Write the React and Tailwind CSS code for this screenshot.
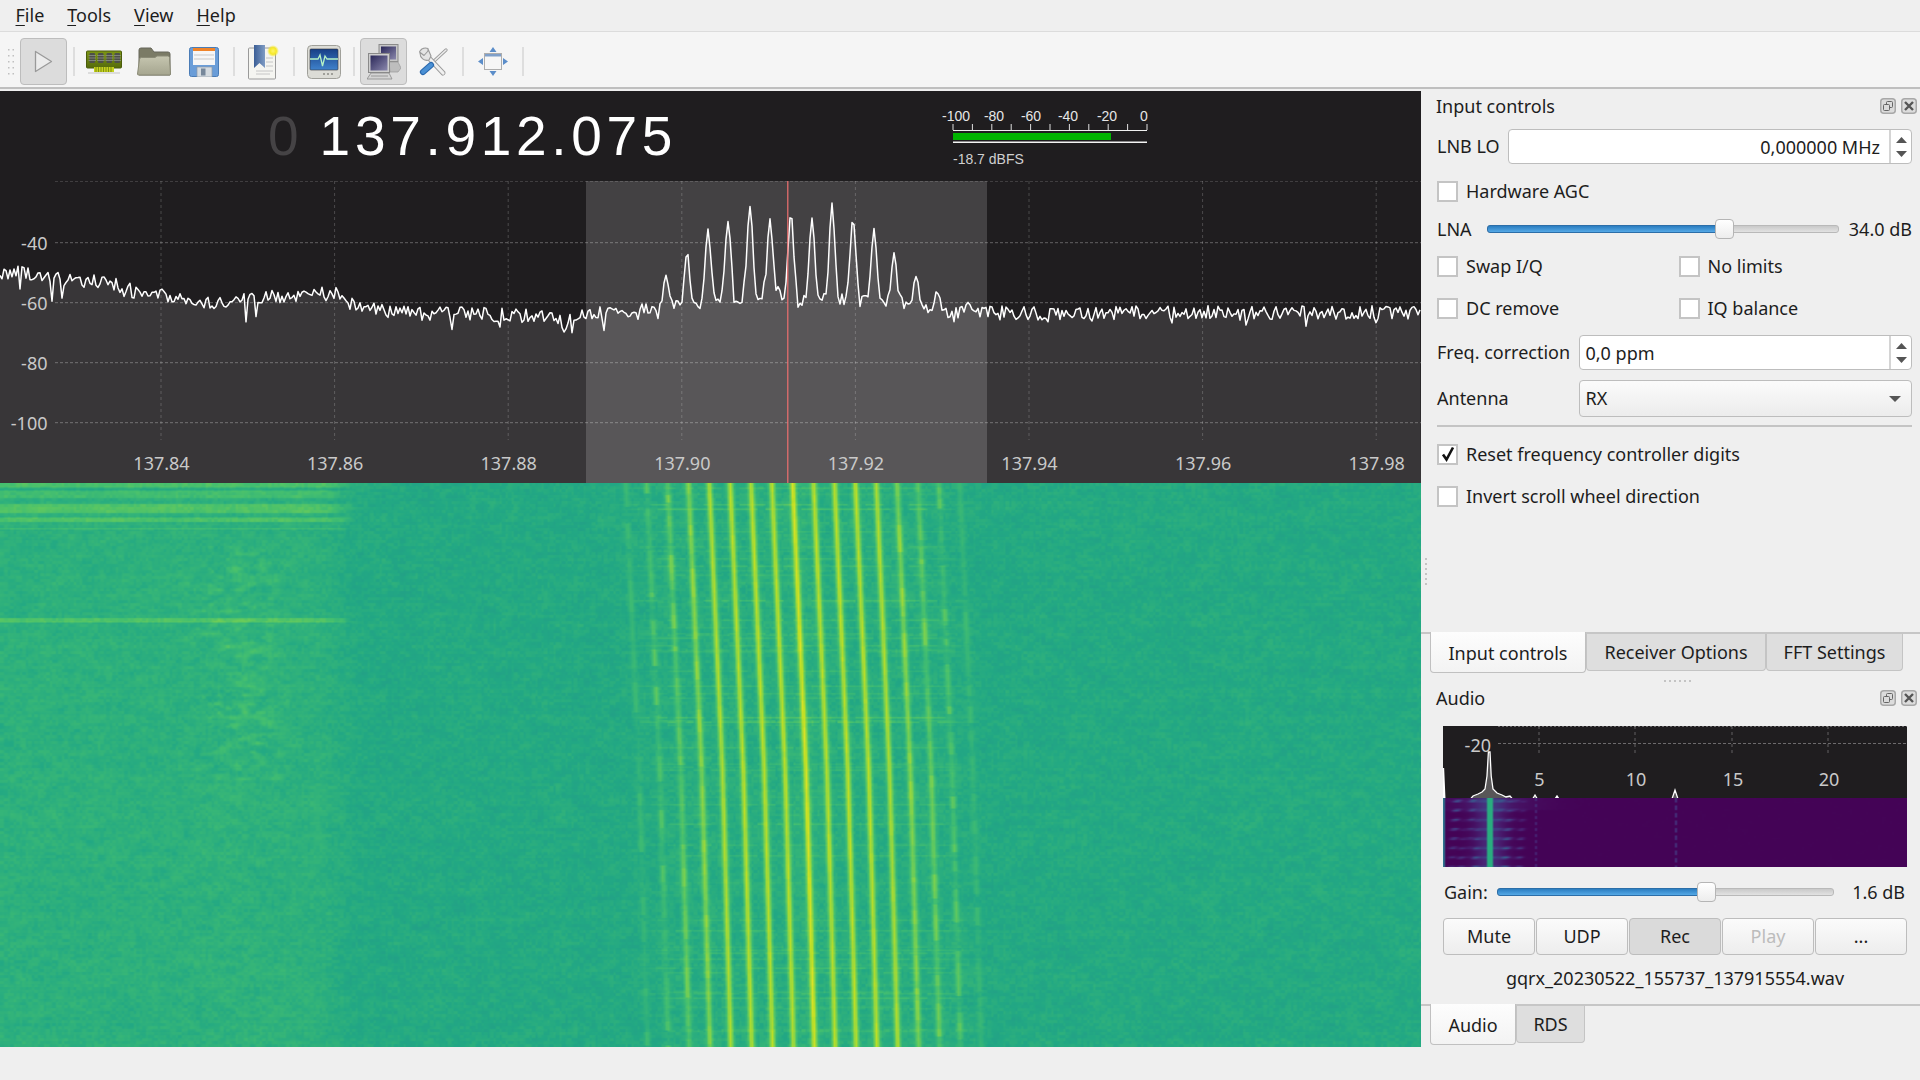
import React, { useEffect, useRef } from 'react';

// seeded random so the plots come out the same on every load
const makeRandom = (seed) => () => {
  seed = (seed + 0x6d2b79f5) | 0;
  let t = Math.imul(seed ^ (seed >>> 15), 1 | seed);
  t = (t + Math.imul(t ^ (t >>> 7), 61 | t)) ^ t;
  return ((t ^ (t >>> 14)) >>> 0) / 4294967296;
};

const VIRIDIS = [
  [68, 1, 84], [72, 36, 117], [65, 68, 135], [53, 95, 141], [42, 120, 142], [33, 145, 140],
  [34, 168, 132], [68, 191, 112], [122, 209, 81], [189, 223, 38], [253, 231, 37],
];

const viridis = (v) => {
  const p = Math.max(0, Math.min(0.9999, v)) * 10;
  const i = Math.floor(p);
  const f = p - i;
  return VIRIDIS[i].map((c, k) => c + (VIRIDIS[i + 1][k] - c) * f);
};

const interp = (pts, x) => {
  for (let i = 1; i < pts.length; i++) {
    if (x <= pts[i][0]) {
      const [x0, y0] = pts[i - 1];
      const [x1, y1] = pts[i];
      return y0 + ((y1 - y0) * (x - x0)) / (x1 - x0);
    }
  }
  return pts[pts.length - 1][1];
};

// FFT trace
const FLOOR = [
  [0, 275], [20, 274], [51, 280], [102, 282], [143, 295], [168, 297], [219, 305], [265, 299], [327, 292],
  [347, 297], [357, 309], [408, 314], [510, 316], [576, 320], [587, 313], [640, 312], [680, 309], [700, 307],
  [735, 300], [780, 297], [800, 306], [850, 302], [870, 306], [900, 307], [930, 310], [985, 314], [1000, 314], [1421, 313],
];
const PEAKS = [
  [666, 275], [687, 252], [708, 228], [728, 221], [750, 206], [770, 220], [791, 213], [812, 219],
  [832, 204], [853, 218], [874, 228], [894, 252], [916, 277], [937, 292], [968, 302],
];

const buildTrace = () => {
  const rnd = makeRandom(42);
  const pts = [];
  for (let x = 0; x <= 1421; x += 2) {
    const floor = interp(FLOOR, x);
    let noise = rnd() * 14 - 8;
    if (rnd() < 0.1) noise += 3 + rnd() * 14;
    let lift = 0;
    let share = 0;
    for (const [px, py] of PEAKS) {
      const h = floor - py;
      const dx = Math.abs(x - px);
      const g = Math.exp(-((dx / 3.8) ** 2));
      const l = h * (0.92 * g + 0.08 * Math.exp(-dx / 7));
      if (l > lift) {
        lift = l;
        share = g;
      }
    }
    pts.push([x, floor + noise * (1 - 0.85 * share) - lift]);
  }
  return pts;
};

const TRACE = buildTrace();
const TRACE_LINE = TRACE.map((p) => p.join(',')).join(' ');

const Heatmap = ({ width, height, cols, rows, value, className }) => {
  const ref = useRef(null);

  useEffect(() => {
    const src = document.createElement('canvas');
    src.width = cols;
    src.height = rows;
    const sctx = src.getContext('2d');
    const img = sctx.createImageData(cols, rows);
    const get = value(cols, rows);
    for (let r = 0; r < rows; r++) {
      for (let c = 0; c < cols; c++) {
        const [red, g, b] = viridis(get(c, r));
        const i = (r * cols + c) * 4;
        img.data[i] = red;
        img.data[i + 1] = g;
        img.data[i + 2] = b;
        img.data[i + 3] = 255;
      }
    }
    sctx.putImageData(img, 0, 0);
    const ctx = ref.current.getContext('2d');
    ctx.imageSmoothingEnabled = true;
    ctx.drawImage(src, 0, 0, width, height);
  }, []);

  return <canvas ref={ref} width={width} height={height} className={className} />;
};

const LINE_AMP = [0.95, 0.9, 0.905, 0.9, 0.885, 0.86, 0.81, 0.76, 0.69];

const waterfallValue = (cols, rows) => {
  const rnd = makeRandom(7);
  const sx = 1421 / cols;
  const sy = 564 / rows;

  // coarse noise for the blotches
  const gw = 130;
  const gh = 80;
  const coarse = Array.from({ length: gh * gw }, () => rnd());
  const lf = (x, y) => {
    const gx = ((x / 1421) * gw) % gw;
    const gy = ((y / 564) * gh) % gh;
    const i = Math.floor(gx);
    const j = Math.floor(gy);
    const fx = gx - i;
    const fy = gy - j;
    const at = (a, b) => coarse[(b % gh) * gw + (a % gw)];
    return (at(i, j) * (1 - fx) + at(i + 1, j) * fx) * (1 - fy) + (at(i, j + 1) * (1 - fx) + at(i + 1, j + 1) * fx) * fy;
  };

  // fine speckle, about 3px a cell
  const speckle = Array.from({ length: 480 * 190 }, () => rnd() - 0.5);

  const rowNoise = Array.from({ length: rows }, () => (rnd() - 0.5) * 0.012);
  const streak = Array.from({ length: rows }, () => (rnd() < 0.2 ? 0.012 + rnd() * 0.045 : 0));
  [505, 509, 718, 722, 600].forEach((y) => {
    streak[Math.floor((y - 483) / sy)] = 0.08;
  });
  const streakCell = Array.from({ length: 4000 }, () => rnd());

  // each carrier fades in and out in short runs
  const lineMod = Array.from({ length: 17 }, (_, k) => {
    const n = Math.abs(k - 8);
    const out = [];
    while (out.length < rows) {
      const run = 3 + Math.floor(rnd() * 10);
      const low = n >= 7 ? 0.1 : n === 6 ? 0.4 : n === 5 ? 0.65 : 0.9;
      const m = low + rnd() * (1 - low);
      for (let i = 0; i < run; i++) out.push(m);
    }
    return out;
  });

  const stripes = [
    [483, 487, 0.075], [490, 498, 0.06], [503, 512, 0.085], [517, 522, 0.08], [527, 529, 0.05], [617, 622, 0.09],
  ];

  return (c, r) => {
    const X = c * sx;
    const Y = r * sy + 483;
    const leftFade = X < 320 ? 1 : X < 355 ? (355 - X) / 35 : 0;
    const sp = speckle[Math.floor((Y - 483) / 3) * 480 + Math.floor(X / 3)];
    let v = 0.607 + 0.028 * leftFade + (lf(X, Y - 483) - 0.5) * 0.035 + rowNoise[r] + sp * 0.04;

    for (const [a, b, amp] of stripes) {
      if (Y >= a && Y < b) v += amp * Math.min(1, leftFade * 1.4);
    }
    if (Y < 530 && leftFade > 0 && (Math.abs(Y - 488.5) < 1 || Math.abs(Y - 500.5) < 1)) v -= 0.01;

    // faint blotches on the left
    if (X > 170 && X < 300 && Y > 545) {
      const edge = Math.min(1, (X - 170) / 45, (300 - X) / 45);
      const wave = Math.max(0, lf(X * 1.3, (Y - 483) * 1.6) - 0.45);
      v += edge * wave * (Y < 780 ? 0.14 : 0.05);
    }

    const drift = Y < 770 ? ((Y - 483) * 13.3) / 287 : 13.3 + ((Y - 770) * 8.3) / 276;
    const cx = 791.7 + drift;
    const off = X - cx;
    const dist = Math.abs(off);
    const band = dist < 130 ? 1 : dist < 180 ? (180 - dist) / 50 : 0;

    if (band > 0) {
      v += 0.012 * band;
      const cell = streakCell[(r * 31 + Math.floor(X / 9) * 17) % 4000];
      v += streak[r] * band * (cell < 0.65 ? 1 : 0.15);
      if (dist < 22) v += 0.02 * (1 - dist / 22);
    }

    const n = Math.round(off / 20.87);
    if (Math.abs(n) <= 8) {
      const dx = off - n * 20.87;
      const mod = lineMod[n + 8][r];
      const amp = LINE_AMP[Math.abs(n)];
      const p = Math.exp(-((dx / 3) ** 2));
      v += (amp - v) * p * mod;
    }
    return v;
  };
};

const audioFallValue = () => {
  const rnd = makeRandom(19);
  const g = (x, c, w) => Math.exp(-(((x - c) / w) ** 2));
  return (c, r) => {
    const x = c * 2;
    const y = r * 1.5;
    const row = Math.max(0, Math.sin((2 * Math.PI * y) / 9.4)) ** 2;
    const dots = 0.6 + 0.4 * Math.sin(x * 0.45 + r * 1.1);
    let v = 0.005;
    v += 0.2 * g(x, 46, 15) * (0.55 + 0.45 * row);
    v += 0.24 * row * dots * (g(x, 13, 7) + g(x, 30, 5) + g(x, 62, 7) + 0.6 * g(x, 76, 5));
    if (y < 12) v += 0.05 * g(x, 50, 45);
    if (Math.abs(x - 46) < 2.2) v = 0.62;
    if (x < 2) v = 0.38;
    if (Math.abs(x - 92) < 1.5 && r % 4 < 2) v += 0.1;
    if (Math.abs(x - 232) < 1.5 && r % 5 < 3) v += 0.14;
    return v + rnd() * 0.004;
  };
};

const TICKS = [953, 972.4, 991.8, 1011.2, 1030.6, 1050, 1069.4, 1088.8, 1108.2, 1127.6, 1147];
const METER_LABELS = [[956, '-100'], [994, '-80'], [1031, '-60'], [1068, '-40'], [1107, '-20'], [1144, '0']];

const FreqHeader = () => (
  <div className="flex h-[90px] bg-[#1f1d1f]">
    <div className="flex w-[935px] items-center pl-[268px] font-['Liberation_Sans',sans-serif] text-[55px] leading-none">
      <span className="text-[#454345]">0</span>
      <span className="ml-[21px] tracking-[4.7px] text-white">137.912.075</span>
    </div>
    <svg width="225" height="90" viewBox="935 91 225 90">
      {METER_LABELS.map(([x, t]) => (
        <text key={t} x={x} y="121" textAnchor="middle" fill="#e6e6e6" fontSize="14" className="font-['Liberation_Sans',sans-serif]">{t}</text>
      ))}
      {TICKS.map((x) => (
        <line key={x} x1={x} x2={x} y1="124" y2="130" stroke="#e0e0e0" />
      ))}
      <line x1="953" x2="1147" y1="130.5" y2="130.5" stroke="#f0f0f0" />
      <rect x="953" y="133" width="158" height="7" fill="#00b400" />
      <rect x="953" y="141.5" width="194" height="1.5" fill="#f4f4f4" />
      <text x="953" y="164" fill="#d0d0d0" fontSize="14" className="font-['Liberation_Sans',sans-serif]">-18.7 dBFS</text>
    </svg>
  </div>
);

const GRID_X = [161, 334.6, 508.2, 681.8, 855.4, 1029, 1202.6, 1376.2];
const FREQ_LABELS = ['137.84', '137.86', '137.88', '137.90', '137.92', '137.94', '137.96', '137.98'];
const DB_ROWS = [[242.7, '-40'], [302.7, '-60'], [362.7, '-80'], [422.7, '-100']];

const Spectrum = () => (
  <svg width="1421" height="302" viewBox="0 181 1421 302" className="block">
    <rect x="0" y="181" width="1421" height="302" fill="#1f1d1f" />
    <polygon points={`0,483 ${TRACE_LINE} 1421,483`} fill="#383638" />
    <rect x="586" y="181" width="401" height="302" fill="#ffffff" fillOpacity="0.16" />
    {GRID_X.map((x) => (
      <line key={x} x1={x} x2={x} y1="181" y2="440" stroke="#ffffff" strokeOpacity="0.2" strokeDasharray="3 3" />
    ))}
    <line x1="55" x2="1421" y1="181.5" y2="181.5" stroke="#ffffff" strokeOpacity="0.15" strokeDasharray="3 2" />
    {DB_ROWS.map(([y]) => (
      <line key={y} x1="55" x2="1421" y1={y} y2={y} stroke="#ffffff" strokeOpacity="0.3" strokeDasharray="3 2" />
    ))}
    <polyline points={TRACE_LINE} fill="none" stroke="#ffffff" strokeWidth="1.5" strokeLinejoin="round" />
    <line x1="787.8" x2="787.8" y1="181" y2="483" stroke="#f07070" strokeWidth="1.2" />
    {DB_ROWS.map(([y, t]) => (
      <text key={t} x="47.5" y={y + 7} textAnchor="end" fill="#c9c9c9" fontSize="18" className="font-['Noto_Sans',sans-serif]">{t}</text>
    ))}
    {GRID_X.map((x, i) => (
      <text key={x} x={x + 0.5} y="469.5" textAnchor="middle" fill="#c9c9c9" fontSize="18" className="font-['Noto_Sans',sans-serif]">{FREQ_LABELS[i]}</text>
    ))}
  </svg>
);

const AUDIO_TRACE = [
  [1443.5, 802], [1443.5, 768], [1445, 802], [1468, 802], [1473, 796], [1478, 794], [1482, 792], [1485, 789], [1487, 776],
  [1488.4, 752], [1490, 752], [1491.2, 776], [1493, 789], [1497, 793], [1502, 795], [1506, 797], [1510, 796], [1515, 802],
  [1531, 802], [1535, 795], [1539, 802], [1553, 802], [1557, 796], [1561, 802], [1671, 802], [1675, 790], [1679, 802], [1906, 802],
];

const AudioPlot = () => (
  <div className="ml-[22px] w-[464px]">
    <svg width="464" height="72" viewBox="1443 726 464 72" className="block">
      <rect x="1443" y="726" width="464" height="72" fill="#1f1d1f" />
      <line x1="1498" x2="1907" y1="726.5" y2="726.5" stroke="#ffffff" strokeOpacity="0.35" strokeDasharray="2 2" />
      <line x1="1498" x2="1907" y1="743.5" y2="743.5" stroke="#ffffff" strokeOpacity="0.35" strokeDasharray="3 2" />
      {[1539, 1635, 1732, 1828].map((x) => (
        <line key={x} x1={x} x2={x} y1="726" y2="755" stroke="#ffffff" strokeOpacity="0.3" strokeDasharray="3 3" />
      ))}
      <polygon points={AUDIO_TRACE.map((p) => p.join(',')).join(' ')} fill="#585658" />
      <polyline points={AUDIO_TRACE.map((p) => p.join(',')).join(' ')} fill="none" stroke="#ffffff" strokeWidth="1.3" />
      <text x="1491" y="751.5" textAnchor="end" fill="#c9c9c9" fontSize="18" className="font-['Noto_Sans',sans-serif]">-20</text>
      {[[1539.5, '5'], [1636, '10'], [1733, '15'], [1829, '20']].map(([x, t]) => (
        <text key={t} x={x} y="785.5" textAnchor="middle" fill="#c9c9c9" fontSize="18" className="font-['Noto_Sans',sans-serif]">{t}</text>
      ))}
    </svg>
    <Heatmap width={464} height={69} cols={232} rows={46} value={audioFallValue} className="block" />
  </div>
);

const ChipIcon = () => (
  <svg width="36" height="24" viewBox="0 0 36 24">
    <defs>
      <linearGradient id="pcb" x1="0" y1="0" x2="0" y2="1">
        <stop offset="0" stopColor="#7d9614" />
        <stop offset="1" stopColor="#556b0c" />
      </linearGradient>
    </defs>
    <rect x="0.5" y="1" width="35" height="17" rx="1" fill="url(#pcb)" stroke="#4a5c0c" />
    <path d="M8 17h20v5H8z" fill="#c5d21e" />
    <path d="M10 17v5M12.5 17v5M15 17v5M17.5 17v5M20 17v5M22.5 17v5M25 17v5" stroke="#6e7f10" strokeWidth="0.8" />
    {[3.5, 12, 20.5, 28.5].map((x) => (
      <g key={x}>
        <rect x={x} y="3" width="5.5" height="10" rx="1" fill="#4d4f4a" />
        <path d={`M${x - 1} 5.5h7.5M${x - 1} 8h7.5M${x - 1} 10.5h7.5`} stroke="#8d9088" strokeWidth="0.8" />
      </g>
    ))}
    <rect x="2" y="22" width="32" height="2" fill="#000000" fillOpacity="0.1" />
  </svg>
);

const FolderIcon = () => (
  <svg width="34" height="29" viewBox="0 0 34 29">
    <defs>
      <linearGradient id="folderFront" x1="0" y1="0" x2="0" y2="1">
        <stop offset="0" stopColor="#c6c6b0" />
        <stop offset="1" stopColor="#a5a58f" />
      </linearGradient>
    </defs>
    <path d="M2 28V3a2 2 0 0 1 2-2h10l3 4h14a2 2 0 0 1 2 2v21z" fill="#7b7b66" stroke="#66665a" />
    <path d="M0.5 27l2-15a2 2 0 0 1 2-1.5H18l2-1.5h10.5a2 2 0 0 1 2 2.5l1 15.5a1 1 0 0 1-1 1H1.5a1 1 0 0 1-1-1z" fill="url(#folderFront)" stroke="#8a8a76" />
  </svg>
);

const FloppyIcon = () => (
  <svg width="30" height="30" viewBox="0 0 30 30">
    <rect x="0.5" y="0.5" width="29" height="29" rx="2" fill="#6a9dd8" stroke="#4a7cb6" />
    <rect x="4" y="1" width="22" height="17" fill="#f6f6f6" />
    <rect x="4" y="1" width="22" height="3" fill="#f0842a" />
    <path d="M5 8h20M5 12h20" stroke="#c9c9c9" />
    <rect x="8" y="20" width="15" height="10" fill="#d5dbe0" stroke="#8f9aa6" strokeWidth="0.7" />
    <rect x="12" y="21.5" width="4.5" height="7" fill="#77889b" />
  </svg>
);

const BookmarkIcon = () => (
  <svg width="31" height="36" viewBox="0 0 31 36">
    <defs>
      <radialGradient id="glow">
        <stop offset="0" stopColor="#fff56a" />
        <stop offset="0.55" stopColor="#f6e826" />
        <stop offset="1" stopColor="#f6e826" stopOpacity="0" />
      </radialGradient>
      <linearGradient id="ribbon" x1="0" y1="0" x2="1" y2="0">
        <stop offset="0" stopColor="#3c5f96" />
        <stop offset="1" stopColor="#7f9cc4" />
      </linearGradient>
    </defs>
    <rect x="0.5" y="4" width="27" height="31" rx="1" fill="#f5f5f1" stroke="#9a9a9a" />
    <path d="M18 14h7M18 18h7M18 22h7M8 27h17M8 30h14" stroke="#c6c6c6" />
    <path d="M6 1h11v23l-5.5-5-5.5 5z" fill="url(#ribbon)" />
    <circle cx="25" cy="7" r="6" fill="url(#glow)" />
  </svg>
);

const MonitorIcon = () => (
  <svg width="34" height="34" viewBox="0 0 34 34">
    <defs>
      <linearGradient id="scope" x1="0" y1="0" x2="0" y2="1">
        <stop offset="0" stopColor="#173f86" />
        <stop offset="1" stopColor="#3f82cc" />
      </linearGradient>
    </defs>
    <rect x="0.5" y="0.5" width="33" height="33" rx="4" fill="#dcdcd6" stroke="#a0a09a" />
    <rect x="3" y="4" width="28" height="21" rx="1" fill="url(#scope)" stroke="#33333a" strokeWidth="0.6" />
    <polyline points="3,14 11,14 13,10 15.5,21 18,11 20,14 31,14" fill="none" stroke="#b5f2c6" strokeWidth="1.3" />
    <circle cx="17" cy="29" r="1" fill="#8b8b85" />
    <circle cx="21" cy="29" r="1" fill="#8b8b85" />
    <circle cx="25" cy="29" r="1" fill="#8b8b85" />
  </svg>
);

const ComputersIcon = () => (
  <svg width="34" height="36" viewBox="0 0 34 36">
    <defs>
      <linearGradient id="screenA" x1="0" y1="0" x2="1" y2="1">
        <stop offset="0" stopColor="#2a2758" />
        <stop offset="1" stopColor="#8b88ad" />
      </linearGradient>
    </defs>
    <rect x="12" y="0.5" width="19" height="17" fill="#c6c6c6" stroke="#8a8a8a" />
    <rect x="14" y="2.5" width="15" height="13" fill="url(#screenA)" />
    <path d="M22 18h9l3 6-3 4h-8z" fill="#bdbdbd" stroke="#9a9a9a" strokeWidth="0.7" />
    <rect x="1.5" y="9.5" width="21" height="19" fill="#cecece" stroke="#8a8a8a" />
    <rect x="3.5" y="11.5" width="17" height="15" fill="url(#screenA)" />
    <path d="M4 29h18l3 6H0z" fill="#d4d4d4" stroke="#8a8a8a" strokeWidth="0.8" />
    <path d="M4 32h17" stroke="#8a8a8a" strokeWidth="0.8" />
  </svg>
);

const ToolsIcon = () => (
  <svg width="30" height="30" viewBox="0 0 30 30">
    <path d="M28 3L15 15" stroke="#9b9b9b" strokeWidth="3.2" strokeLinecap="round" />
    <path d="M28 3L15 15" stroke="#ececec" strokeWidth="1.6" strokeLinecap="round" />
    <path d="M10 10L25 26" stroke="#9a9a9a" strokeWidth="5" strokeLinecap="round" />
    <path d="M10 10L25 26" stroke="#f0f0f0" strokeWidth="3.2" strokeLinecap="round" />
    <path d="M10 1.5A6.5 6.5 0 0 0 2 4L1.5 5 6 8.5l4-4.5zM2 6a7 7 0 0 0 9 7l2-4-3-7" fill="#e4e4e4" stroke="#9a9a9a" strokeWidth="1.1" strokeLinejoin="round" />
    <path d="M13 18L5 25" stroke="#2a68ad" strokeWidth="6.2" strokeLinecap="round" />
    <path d="M13 18L5 25" stroke="#4a90d4" strokeWidth="4" strokeLinecap="round" />
  </svg>
);

const MoveIcon = () => (
  <svg width="32" height="31" viewBox="0 0 32 31">
    <path d="M16 1l3.5 5h-7zM16 30l3.5-5h-7zM1 15.5l5-3.5v7zM31 15.5l-5-3.5v7z" fill="#5b8dc9" />
    <rect x="7.5" y="7.5" width="17" height="16" fill="#f6f6f6" stroke="#adadad" />
    <rect x="8" y="8" width="16" height="2.5" fill="#7f9fc9" />
  </svg>
);

const MenuItem = ({ first, rest }) => (
  <span className="px-[11.5px]">
    <span className="underline underline-offset-[3px]">{first}</span>
    {rest}
  </span>
);

const ToolBtn = ({ active, className = '', children }) => (
  <div className={`flex h-[47px] w-[47px] items-center justify-center rounded-[4px] border ${active ? 'border-[#bdbdbd] bg-[#dcdcdc]' : 'border-transparent'} ${className}`}>
    {children}
  </div>
);

const ToolSep = ({ className = '' }) => <div className={`ml-[6px] mr-[5px] h-[29px] w-[2px] bg-[#dedede] ${className}`} />;

const Toolbar = () => (
  <div className="flex h-[57px] items-center border-b-2 border-[#bfbfbf] bg-[#f5f5f5] pl-[8px] pt-[4px]">
    <svg width="6" height="26" viewBox="0 0 6 26" className="mr-[6px]">
      {[0, 6, 12, 18, 24].flatMap((y) => [0, 4.5].map((x) => <rect key={`${x}-${y}`} x={x} y={y} width="1.5" height="1.5" fill="#c0c0c0" />))}
    </svg>
    <ToolBtn active>
      <svg width="19" height="23" viewBox="0 0 19 23">
        <path d="M1.5 1.5L17.5 11.5L1.5 21.5z" fill="#ececec" stroke="#9a9a9a" strokeWidth="1.3" strokeLinejoin="round" />
      </svg>
    </ToolBtn>
    <ToolSep />
    <ToolBtn><ChipIcon /></ToolBtn>
    <ToolBtn className="ml-[3px]"><FolderIcon /></ToolBtn>
    <ToolBtn className="ml-[3px]"><FloppyIcon /></ToolBtn>
    <ToolSep />
    <ToolBtn><BookmarkIcon /></ToolBtn>
    <ToolSep className="mr-[4px]" />
    <ToolBtn><MonitorIcon /></ToolBtn>
    <ToolSep />
    <ToolBtn active><ComputersIcon /></ToolBtn>
    <ToolBtn className="ml-[2px]"><ToolsIcon /></ToolBtn>
    <ToolSep />
    <ToolBtn><MoveIcon /></ToolBtn>
    <ToolSep />
  </div>
);

const DockTitle = ({ title }) => (
  <div className="flex h-[30px] items-center justify-between pl-[15px] pr-[3.5px]">
    <span>{title}</span>
    <div className="flex gap-[5px]">
      <svg width="16" height="16" viewBox="0 0 16 16">
        <rect x="0.75" y="0.75" width="14.5" height="14.5" rx="3" fill="#dcdcdc" stroke="#a8a8a8" strokeWidth="1.5" />
        <rect x="6.5" y="3.5" width="6" height="6" rx="1" fill="none" stroke="#666" />
        <rect x="3.5" y="6.5" width="6" height="6" rx="1" fill="#dcdcdc" stroke="#666" />
      </svg>
      <svg width="16" height="16" viewBox="0 0 16 16">
        <rect x="0.75" y="0.75" width="14.5" height="14.5" rx="3" fill="#dcdcdc" stroke="#a8a8a8" strokeWidth="1.5" />
        <path d="M4 4l8 8M12 4l-8 8" stroke="#555" strokeWidth="2.4" />
      </svg>
    </div>
  </div>
);

const SpinArrows = () => (
  <div className="flex w-[22px] shrink-0 flex-col items-center justify-center gap-[8px] border-l-2 border-[#d4d4d4]">
    <svg width="11" height="6" viewBox="0 0 11 6"><path d="M5.5 0L11 6H0z" fill="#555" /></svg>
    <svg width="11" height="6" viewBox="0 0 11 6"><path d="M5.5 6L11 0H0z" fill="#555" /></svg>
  </div>
);

const SpinBox = ({ align, className = '', children }) => (
  <div className={`flex h-[35px] items-stretch rounded-[4px] border border-[#bdbdbd] bg-white ${className}`}>
    <div className={`flex flex-1 items-center pt-[2px] ${align === 'right' ? 'justify-end pr-[9px]' : 'pl-[6px]'}`}>{children}</div>
    <SpinArrows />
  </div>
);

const CheckRow = ({ label, checked, className = '' }) => (
  <div className={`flex h-[20px] items-center ${className}`}>
    <div className="flex h-[21px] w-[21px] shrink-0 items-center justify-center border-2 border-[#c4c4c4] bg-white">
      {checked && (
        <svg width="14" height="16" viewBox="0 0 14 16">
          <path d="M2 8.5L5.5 13.5L12 1.5" fill="none" stroke="#111" strokeWidth="2.6" />
        </svg>
      )}
    </div>
    <span className="ml-[8px] whitespace-nowrap">{label}</span>
  </div>
);

const Slider = ({ filled, total, className = '' }) => (
  <div className={`relative h-[20px] ${className}`} style={{ width: total }}>
    <div className="absolute left-0 right-0 top-[6px] h-[8px] rounded-[3px] border border-[#b9b9b9] bg-linear-to-b from-[#c9c9c9] to-[#e2e2e2]" />
    <div className="absolute left-0 top-[6px] h-[8px] rounded-[3px] border border-[#2c6ea8] bg-linear-to-b from-[#2a7dc0] to-[#55a9e6]" style={{ width: filled + 6 }} />
    <div className="absolute top-0 h-[20px] w-[19px] rounded-[4px] border border-[#b5b5b5] bg-linear-to-b from-[#ffffff] to-[#ededed]" style={{ left: filled }} />
  </div>
);

const TabBar = ({ tabs, className = '' }) => (
  <div className={`flex border-t-2 border-[#c6c6c6] pl-[9px] ${className}`}>
    {tabs.map(([label, width, selected]) => (
      <div
        key={label}
        style={{ width }}
        className={
          selected
            ? 'flex h-[41px] -mt-[2px] items-center justify-center rounded-b-[4px] border-x border-b border-[#c0c0c0] bg-linear-to-b from-[#fdfdfd] to-[#f3f3f3] pt-[2px]'
            : 'flex h-[37px] items-center justify-center rounded-b-[4px] border-x border-b border-[#c4c4c4] bg-[#dedede]'
        }
      >
        {label}
      </div>
    ))}
  </div>
);

const AudioButton = ({ active, disabled, children }) => (
  <div
    className={`flex h-[37px] items-center justify-center rounded-[4px] border border-[#bdbdbd] ${
      active ? 'bg-[#dadada]' : 'bg-linear-to-b from-[#fbfbfb] to-[#ededed]'
    } ${disabled ? 'text-[#bcbcbc]' : ''}`}
  >
    {children}
  </div>
);

const App = () => {
  return (
    <div className="flex h-[1080px] w-[1920px] flex-col overflow-hidden bg-[#efefef] font-['Noto_Sans',sans-serif] text-[18px] text-[#1d1d1d]">
      <div className="flex h-[32px] items-center border-b border-[#dcdcdc] pl-[4px]">
        <MenuItem first="F" rest="ile" />
        <MenuItem first="T" rest="ools" />
        <MenuItem first="V" rest="iew" />
        <MenuItem first="H" rest="elp" />
      </div>
      <Toolbar />

      <div className="mt-[2px] flex h-[956px]">
        <div className="w-[1421px] shrink-0">
          <FreqHeader />
          <Spectrum />
          <Heatmap width={1421} height={564} cols={711} rows={376} value={waterfallValue} className="block" />
        </div>

        <div className="relative flex-1">
          <div className="absolute left-[4px] top-[467px] flex flex-col gap-[3px]">
            {[0, 1, 2, 3, 4, 5].map((i) => (
              <div key={i} className="h-[2px] w-[2px] bg-[#c4c4c4]" />
            ))}
          </div>

          <DockTitle title="Input controls" />
          <div className="pl-[16px] pr-[8px]">
            <div className="mt-[8px] flex items-center">
              <span className="w-[71px]">LNB LO</span>
              <SpinBox align="right" className="flex-1">0,000000 MHz</SpinBox>
            </div>
            <CheckRow label="Hardware AGC" className="mt-[17px]" />
            <div className="mt-[18px] flex h-[20px] items-center">
              <span className="w-[50px]">LNA</span>
              <Slider total={352} filled={228} />
              <span className="ml-auto">34.0 dB</span>
            </div>
            <div className="mt-[17px] flex">
              <CheckRow label="Swap I/Q" className="w-[241.5px]" />
              <CheckRow label="No limits" />
            </div>
            <div className="mt-[22px] flex">
              <CheckRow label="DC remove" className="w-[241.5px]" />
              <CheckRow label="IQ balance" />
            </div>
            <div className="mt-[17px] flex items-center">
              <span className="w-[141.5px]">Freq. correction</span>
              <SpinBox className="flex-1">0,0 ppm</SpinBox>
            </div>
            <div className="mt-[10px] flex items-center">
              <span className="w-[141.5px]">Antenna</span>
              <div className="flex h-[37px] flex-1 items-center justify-between rounded-[4px] border border-[#bdbdbd] bg-linear-to-b from-[#fbfbfb] to-[#ececec] pl-[6px] pr-[10px]">
                <span>RX</span>
                <svg width="12" height="6" viewBox="0 0 12 6"><path d="M0 0h12L6 6z" fill="#555" /></svg>
              </div>
            </div>
            <div className="mt-[8px] h-[2px] bg-[#c4c4c4]" />
            <CheckRow label="Reset frequency controller digits" checked className="mt-[17px]" />
            <CheckRow label="Invert scroll wheel direction" className="mt-[22px]" />
          </div>

          <TabBar
            className="mt-[126px]"
            tabs={[['Input controls', 156, true], ['Receiver Options', 180, false], ['FFT Settings', 137, false]]}
          />

          <div className="mt-[7px] flex justify-center gap-[3px] pl-[13px]">
            {[0, 1, 2, 3, 4, 5].map((i) => (
              <div key={i} className="h-[2px] w-[2px] bg-[#c4c4c4]" />
            ))}
          </div>
          <div className="mt-[1px]">
            <DockTitle title="Audio" />
          </div>
          <div className="mt-[13px]">
            <AudioPlot />
          </div>
          <div className="ml-[23px] mr-[15px] mt-[15px] flex h-[20px] items-center">
            <span className="w-[53px]">Gain:</span>
            <Slider total={337} filled={200} />
            <span className="ml-auto">1.6 dB</span>
          </div>
          <div className="ml-[22px] mt-[16px] grid w-[464px] grid-cols-5 gap-[1px]">
            <AudioButton>Mute</AudioButton>
            <AudioButton>UDP</AudioButton>
            <AudioButton active>Rec</AudioButton>
            <AudioButton disabled>Play</AudioButton>
            <AudioButton>...</AudioButton>
          </div>
          <div className="ml-[22px] flex h-[46px] w-[464px] items-center justify-center">gqrx_20230522_155737_137915554.wav</div>
          <TabBar className="mt-[3px]" tabs={[['Audio', 86, true], ['RDS', 69, false]]} />
        </div>
      </div>
    </div>
  );
};

export default App;
